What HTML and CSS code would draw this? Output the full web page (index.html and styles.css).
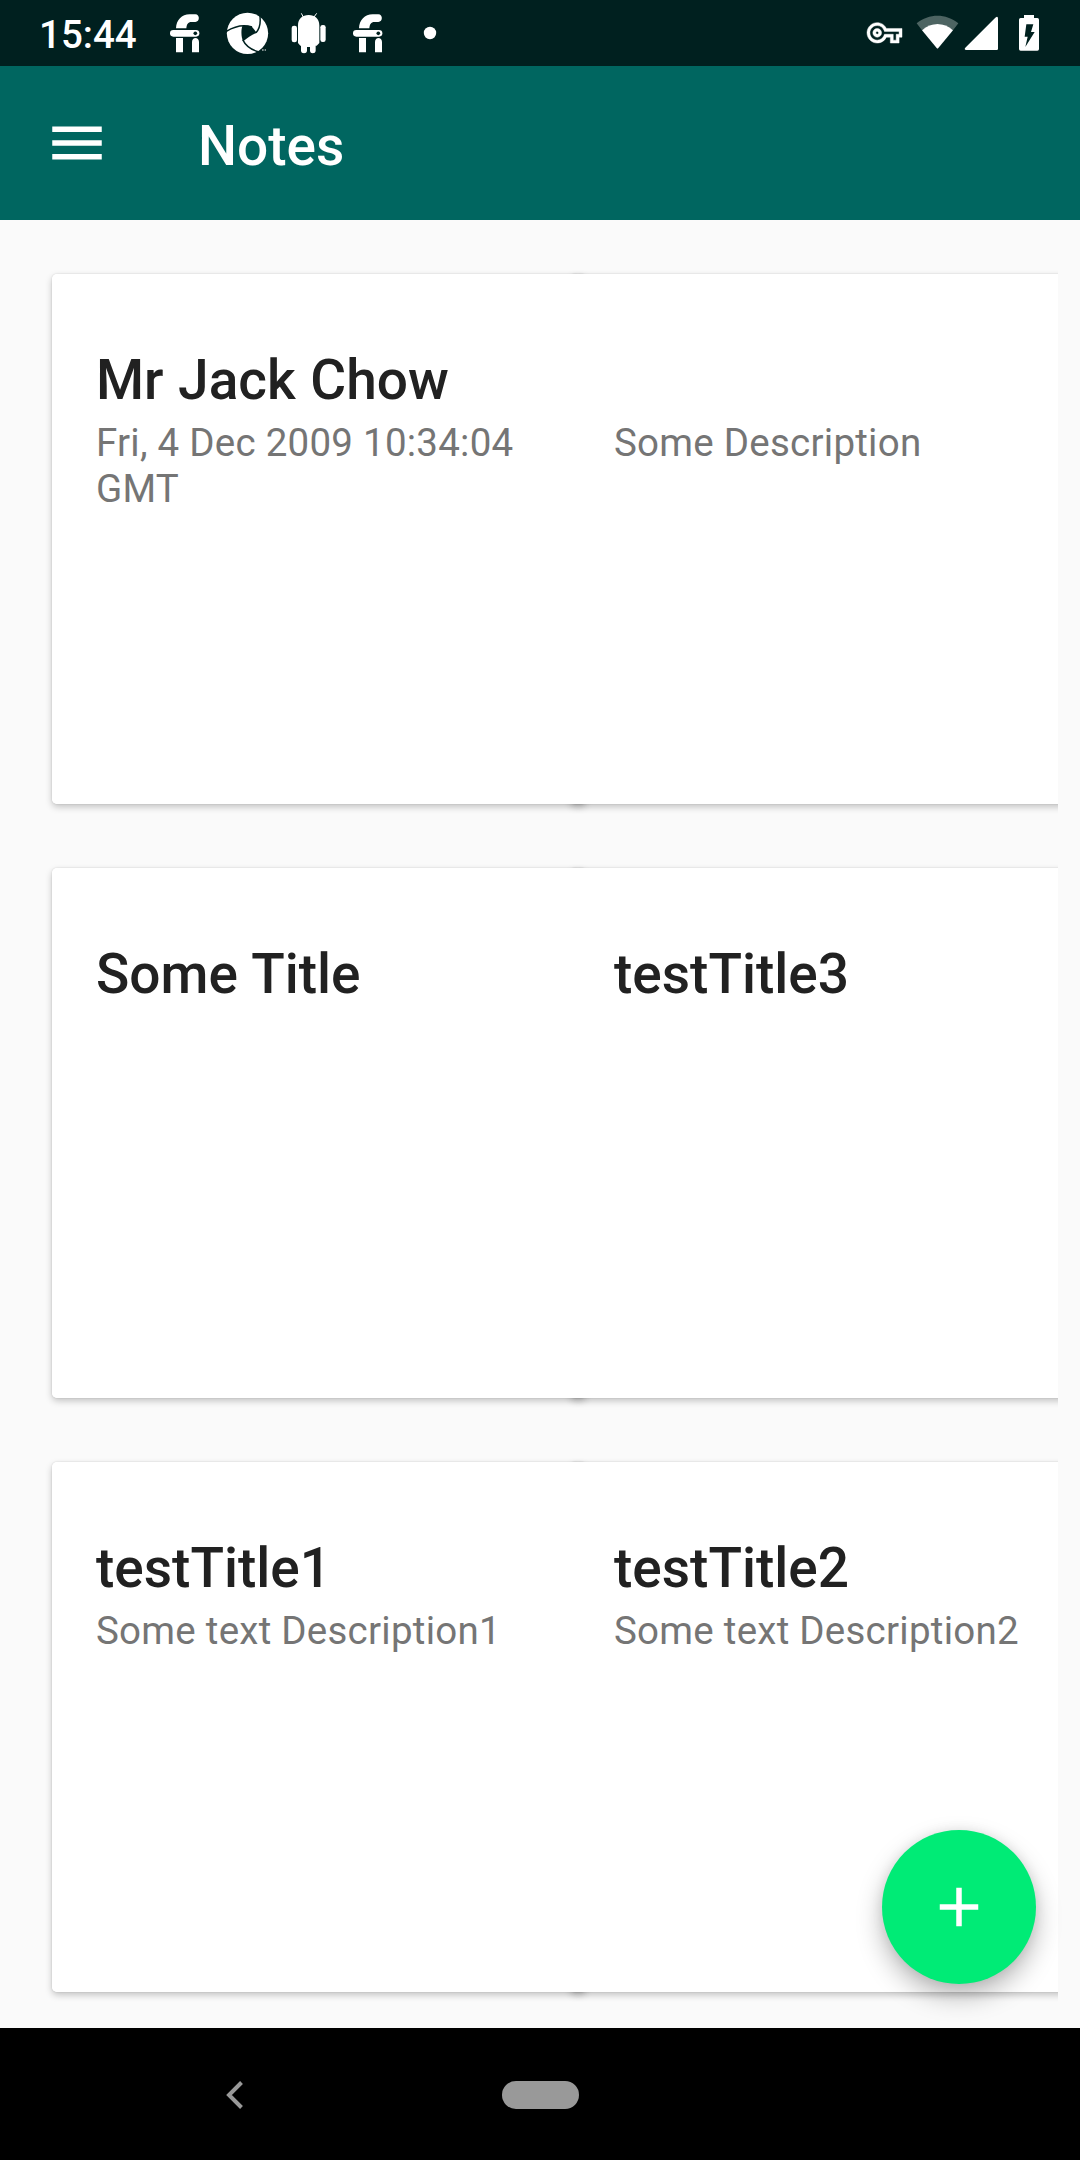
FILE: index.html
```html
<!DOCTYPE html>
<html lang="en">
<head>
<meta charset="utf-8">
<title>Notes</title>
<link rel="stylesheet" href="styles.css">
</head>
<body>
<div class="screen">
  <div class="status-bar">
    <span class="clock">15:44</span>
    <div class="notifications">
      <svg class="slot" viewBox="18 0 183 198">
        <g id="fi" fill="#fff">
          <path d="M78 85C79 60 95 43 119 43H136C150 43 150 66 136 66H124C114 66 110 73 109 85Z"/>
          <rect x="60" y="90" width="88" height="20" rx="10"/>
          <path d="M78 114H99V157H78ZM126 157V126C126 110 147 110 147 126V157Z"/>
          <circle cx="136" cy="100" r="5.500" fill="#00211f"/>
        </g>
      </svg>
      <svg class="slot" viewBox="201 0 183 198">
        <circle cx="292.500" cy="100" r="62" fill="#fff"/>
        <path d="M277 78C286 76 302 77 307 82L320 98C305 105 291 113 280 124C273 112 273 91 277 78Z" fill="#00211f"/>
        <path d="M318 98C331 84 334 66 328 37M306 81C282 73 255 78 229 94M278 119C287 138 303 150 328 156" fill="none" stroke="#00211f" stroke-width="4.500"/>
        <path d="M336 150H341M344 150H348" stroke="#fff" stroke-width="3"/>
      </svg>
      <svg class="slot" viewBox="-36 0 183 198">
        <g fill="#fff">
          <path d="M24 76C24 56 37 45 56 45S88 56 88 76V129L80 137H77V152C77 162 60 162 60 152V141H51V152C51 162 33 162 33 152V137H31L24 129Z"/>
          <rect x="5" y="77" width="16" height="50" rx="7"/>
          <rect x="91" y="75" width="16" height="51" rx="7"/>
        </g>
        <path d="M34 40L40 51M80 40L72 51" stroke="#fff" stroke-width="3"/>
      </svg>
      <svg class="slot" viewBox="18 0 183 198"><use href="#fi"/></svg>
      <svg class="slot" viewBox="0 0 61 66"><circle cx="30" cy="33" r="6.200" fill="#fff"/></svg>
    </div>
    <div class="system-icons">
      <svg class="key" viewBox="78 0 114 198">
        <path transform="translate(81 46) scale(4.375)" stroke="#fff" stroke-width=".3" fill="#fff" d="M22 19h-6v-4h-2.680c-1.140 2.420-3.600 4-6.320 4-3.860 0-7-3.140-7-7s3.140-7 7-7c2.720 0 5.170 1.580 6.320 4H24v6h-2v4zm-4-2h2v-4h2v-2H11.940l-.23-.67C11.010 8.340 9.110 7 7 7c-2.760 0-5 2.240-5 5s2.240 5 5 5c2.110 0 4.010-1.340 4.710-3.330l.23-.67H18v4zM7 15c-1.650 0-3-1.350-3-3s1.350-3 3-3 3 1.350 3 3-1.350 3-3 3zm0-4c-.55 0-1 .45-1 1s.45 1 1 1 1-.45 1-1-.45-1-1-1z"/>
      </svg>
      <svg class="wifi" viewBox="228 0 129 198">
        <path d="M230 70C267 40 318 40 355 70L339 91C311 67 273 67 246 91Z" fill="#4d6462"/>
        <path d="M246 91C273 66 312 66 339 91L295 144Q292.500 147 290 144Z" fill="#fff"/>
      </svg>
      <svg class="signal" viewBox="372 0 105 198">
        <path d="M376 143L466 53Q474 47 474 56V146Q474 150 470 150H379Q371 149 376 143Z" fill="#fff"/>
      </svg>
      <svg class="battery" viewBox="534 0 66 198">
        <path d="M552 45H582V54H592Q597 54 597 59V147Q597 152 592 152H542Q537 152 537 147V59Q537 54 542 54H552Z" fill="#fff"/>
        <path d="M559 73H580L573 96H584L556 141L563 110H554Z" fill="#00211f"/>
      </svg>
    </div>
  </div>

  <header class="app-bar">
    <svg class="menu" viewBox="0 0 24 24" fill="#fff"><path d="M3 18h18v-2H3v2zm0-5h18v-2H3v2zm0-7v2h18V6H3z"/></svg>
    <h1 class="app-title">Notes</h1>
  </header>

  <main class="content">
    <div class="notes">
      <article class="card"><h2 class="title">Mr Jack Chow</h2><p class="description">Fri, 4 Dec 2009 10:34:04 GMT</p></article>
      <article class="card"><h2 class="title"></h2><p class="description">Some Description</p></article>
      <article class="card"><h2 class="title">Some Title</h2></article>
      <article class="card"><h2 class="title">testTitle3</h2></article>
      <article class="card"><h2 class="title">testTitle1</h2><p class="description">Some text Description1</p></article>
      <article class="card"><h2 class="title">testTitle2</h2><p class="description">Some text Description2</p></article>
    </div>
    <button class="fab" aria-label="Add note">
      <svg class="plus" viewBox="0 0 24 24" fill="#fff"><path d="M19 13h-6v6h-2v-6H5v-2h6V5h2v6h6v2z"/></svg>
    </button>
  </main>

  <nav class="nav-bar">
    <svg class="back" viewBox="0 0 20 32"><path d="M16.500 3.500L4 16L16.500 28.500" fill="none" stroke="#999" stroke-width="4"/></svg>
    <span class="home"></span>
  </nav>
</div>
</body>
</html>
```
FILE: styles.css
```css
* { box-sizing: border-box; }

body {
  margin: 0;
  font-family: Roboto, sans-serif;
}

.screen {
  display: flex;
  flex-direction: column;
  width: 1080px;
  height: 2160px;
  overflow: hidden;
  background: #fafafa;
}

.status-bar {
  display: flex;
  height: 66px;
  padding: 0 40px 0 39px;
  background: #00201f;
  color: #fff;
}

.clock {
  width: 117px;
  padding-top: 12px;
  font-size: 38.5px;
  font-weight: 500;
  line-height: 46px;
}

.notifications,
.system-icons {
  display: flex;
}

.slot {
  width: 61px;
  height: 66px;
}

.system-icons {
  margin-left: auto;
}

.system-icons svg { height: 66px; }
.key { width: 38px; margin-right: 12px; }
.wifi { width: 43px; margin-right: 5px; }
.signal { width: 35px; margin-right: 19px; }
.battery { width: 22px; }

.app-bar {
  display: flex;
  align-items: center;
  height: 154px;
  padding-left: 44px;
  background: #006660;
  color: #fff;
}

.menu {
  width: 66px;
  height: 66px;
}

.app-title {
  margin: 6px 0 0 88px;
  font-size: 55px;
  font-weight: 500;
  line-height: 64px;
}

.content {
  position: relative;
  flex: 1;
}

.notes {
  display: grid;
  grid-template-columns: 518px 518px;
  grid-auto-rows: 530px;
  row-gap: 64px;
  height: 1808px;
  margin: 0 22px;
  padding: 54px 0 0 30px;
  overflow: hidden;
  isolation: isolate;
}

.card {
  position: relative;
  width: 534px;
  padding: 74px 44px;
  border-radius: 5px;
  background: #fff;
}

/* Shadows sit beneath every card so neighbours never darken each other. */
.card::before {
  content: "";
  position: absolute;
  inset: 0;
  z-index: -1;
  border-radius: 5px;
  box-shadow: 0 3px 7px rgba(0, 0, 0, 0.22), 0 0 2px rgba(0, 0, 0, 0.14);
}

.title {
  min-height: 64px;
  margin: 0;
  color: #212121;
  font-size: 55px;
  font-weight: 500;
  line-height: 64px;
  word-spacing: 0.9px;
}

.description {
  margin: 8px 0 0;
  color: #757575;
  font-size: 38.5px;
  letter-spacing: 0.25px;
  line-height: 46px;
}

.fab {
  position: absolute;
  right: 44px;
  bottom: 44px;
  display: grid;
  place-items: center;
  width: 154px;
  height: 154px;
  padding: 0;
  border: 0;
  border-radius: 50%;
  background: #00eb76;
  box-shadow: 0 12px 26px rgba(0, 0, 0, 0.28), 0 0 12px rgba(0, 0, 0, 0.08);
}

.plus {
  width: 66px;
  height: 66px;
}

.nav-bar {
  display: flex;
  align-items: center;
  height: 132px;
  padding: 1px 0 0 225px;
  background: #000;
}

.back {
  width: 20px;
  height: 32px;
}

.home {
  width: 77px;
  height: 28px;
  margin-left: 257px;
  border-radius: 14px;
  background: #999;
}
```
